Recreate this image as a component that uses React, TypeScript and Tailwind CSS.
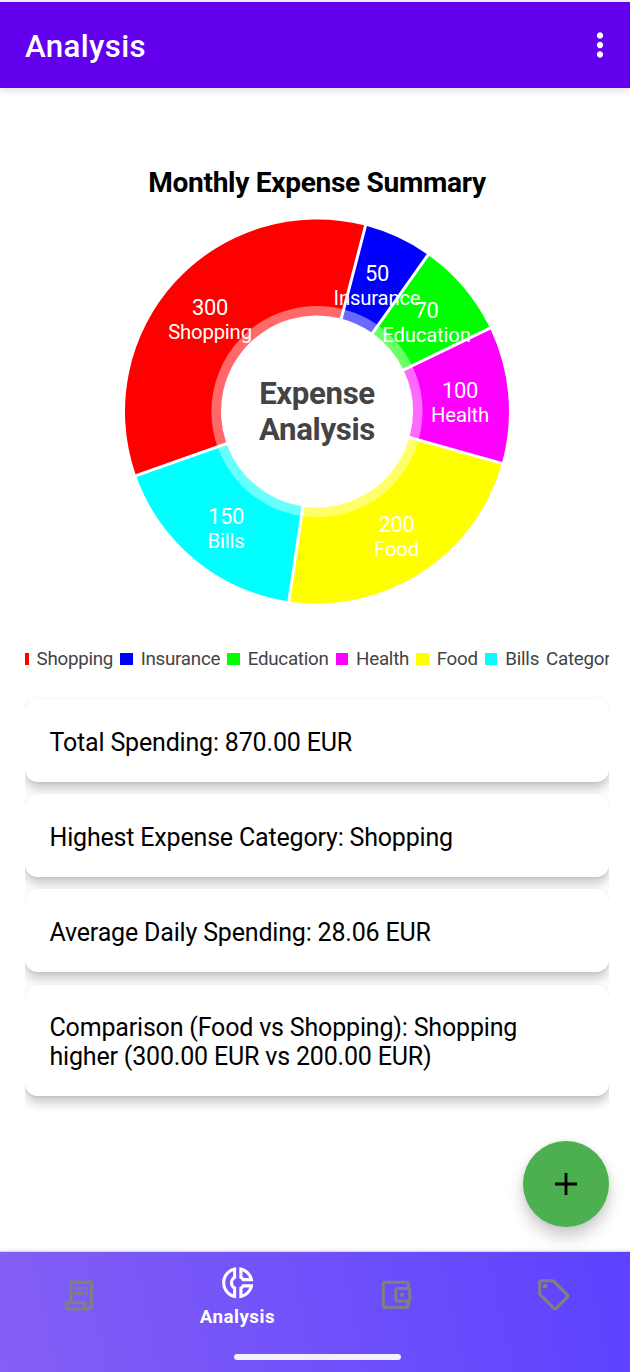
import React from "react";
import {
  MdMoreVert,
  MdOutlineAccountBalanceWallet,
  MdOutlineDonutSmall,
  MdOutlineSell,
} from "react-icons/md";

type Slice = { name: string; value: number; color: string; x: number; y: number };

const slices: Slice[] = [
  { name: "Shopping", value: 300, color: "#ff0000", x: 210, y: 315 },
  { name: "Insurance", value: 50, color: "#0000ff", x: 377, y: 280.5 },
  { name: "Education", value: 70, color: "#00ff00", x: 426.5, y: 318 },
  { name: "Health", value: 100, color: "#ff00ff", x: 460, y: 398 },
  { name: "Food", value: 200, color: "#ffff00", x: 396.5, y: 532 },
  { name: "Bills", value: 150, color: "#00ffff", x: 226, y: 524 },
];

const CX = 317;
const CY = 411.5;
const OUTER = 192;
const INNER = 96;
const START = 250.5;
const total = slices.reduce((sum, s) => sum + s.value, 0);

function point(angle: number, r: number) {
  const a = (angle * Math.PI) / 180;
  return `${(CX + r * Math.sin(a)).toFixed(2)} ${(CY - r * Math.cos(a)).toFixed(2)}`;
}

function slicePath(from: number, to: number) {
  // Half of the 3px gap between neighbours, as an angle at each radius.
  const go = ((1.5 / OUTER) * 180) / Math.PI;
  const gi = ((1.5 / INNER) * 180) / Math.PI;
  return [
    `M${point(from + go, OUTER)}`,
    `A${OUTER} ${OUTER} 0 0 1 ${point(to - go, OUTER)}`,
    `L${point(to - gi, INNER)}`,
    `A${INNER} ${INNER} 0 0 0 ${point(from + gi, INNER)}`,
    "Z",
  ].join(" ");
}

function Donut() {
  let angle = START;
  return (
    <svg className="block h-[400px] w-[634px]" viewBox="0 210 634 400">
      {slices.map((s) => {
        const from = angle;
        angle += (s.value / total) * 360;
        return <path key={s.name} d={slicePath(from, angle)} fill={s.color} />;
      })}
      <circle cx={CX} cy={CY} r={100.6} fill="none" stroke="#fff" strokeOpacity={0.41} strokeWidth={10} />
      <g textAnchor="middle" fill="#fff">
        {slices.map((s) => (
          <g key={s.name}>
            <text x={s.x} y={s.y} fontSize={21.9} letterSpacing={-0.25}>{s.value}</text>
            <text x={s.x} y={s.y + 24.3} fontSize={20.3} letterSpacing={-0.17}>{s.name}</text>
          </g>
        ))}
      </g>
      <g textAnchor="middle" fill="#444" fontSize={31.2} fontWeight={700} letterSpacing={-0.35}>
        <text x={CX} y={404}>Expense</text>
        <text x={CX} y={440}>Analysis</text>
      </g>
    </svg>
  );
}

function ReceiptIcon({ className }: { className: string }) {
  return (
    <svg className={className} viewBox="0 0 24 24" fill="currentColor">
      <path d="M19.5 3.5 18 2l-1.5 1.5L15 2l-1.5 1.5L12 2l-1.5 1.5L9 2 7.5 3.5 6 2v14H3v3c0 1.66 1.34 3 3 3h12c1.66 0 3-1.34 3-3V2l-1.5 1.5zM15 20H6c-.55 0-1-.45-1-1v-1h10v2zm4-1c0 .55-.45 1-1 1s-1-.45-1-1v-3H8V5h11v14z" />
      <rect x="9" y="7" width="6" height="2" rx="0.3" />
      <rect x="9" y="10" width="6" height="2" rx="0.3" />
      <circle cx="17" cy="8" r="1.05" />
      <circle cx="17" cy="11" r="1.05" />
    </svg>
  );
}

function Legend() {
  return (
    <div className="ml-[25px] flex h-[24px] w-[584px] overflow-hidden">
      <div className="-ml-[9px] flex shrink-0 items-center gap-[7px] whitespace-nowrap text-[18.75px] tracking-[-0.25px] text-[#444]">
        {slices.map((s) => (
          <div key={s.name} className="flex items-center gap-[8px]">
            <span className="size-[12.5px]" style={{ backgroundColor: s.color }} />
            <span>{s.name}</span>
          </div>
        ))}
        <span>Categories</span>
      </div>
    </div>
  );
}

function Card({ children }: { children: React.ReactNode }) {
  return (
    <div className="rounded-[12.5px] bg-white pt-[28.7px] pr-[20px] pb-[25px] pl-[24.5px] text-[25px] leading-[29px] tracking-[-0.18px] text-black shadow-[0_7px_11px_rgba(0,0,0,0.21),0_1px_3px_rgba(0,0,0,0.08)]">
      {children}
    </div>
  );
}

export default function App() {
  return (
    <div className="relative flex h-[1372px] w-[630px] flex-col overflow-hidden bg-white font-[Roboto,sans-serif]">
      <header className="flex h-[88px] shrink-0 items-center justify-between border-t-2 border-[#ececf2] bg-[#6200ee] pr-[11px] pl-[25px] text-white shadow-[0_2px_8px_rgba(0,0,0,0.14)]">
        <h1 className="pt-[3px] text-[31.25px] leading-[36px] font-medium tracking-[0.35px]">Analysis</h1>
        <MdMoreVert className="size-[38px]" />
      </header>

      <main className="flex w-[634px] flex-1 flex-col">
        <h2 className="mt-[78px] h-[44px] text-center text-[28.1px] leading-[34px] font-bold tracking-[-0.32px] text-black">
          Monthly Expense Summary
        </h2>
        <Donut />
        <div className="mt-[37px]">
          <Legend />
        </div>
        <section className="mt-[18px] ml-[25px] flex w-[584px] flex-col gap-[12.5px] overflow-hidden pt-[10px] pb-[26px]">
          <Card>Total Spending: 870.00 EUR</Card>
          <Card>Highest Expense Category: Shopping</Card>
          <Card>Average Daily Spending: 28.06 EUR</Card>
          <Card>
            Comparison (Food vs Shopping): Shopping
            <br />
            higher (300.00 EUR vs 200.00 EUR)
          </Card>
        </section>
      </main>

      <button
        aria-label="Add"
        className="absolute top-[1141px] left-[523px] flex size-[86px] items-center justify-center rounded-full bg-[#4caf50] shadow-[0_10px_16px_rgba(0,0,0,0.2),0_0_6px_rgba(0,0,0,0.08)]"
      >
        <svg className="size-[22px]" viewBox="0 0 22 22">
          <path d="M11 0v22M0 11h22" stroke="#000" strokeWidth="2.8" />
        </svg>
      </button>

      <nav className="relative flex h-[121px] w-[634px] shrink-0 flex-col border-t border-[#d5cdfb] bg-[linear-gradient(78deg,#845ff5,#5c42ff)] shadow-[0_-1px_5px_rgba(0,0,0,0.08)]">
        <div className="grid h-[87px] w-[633px] grid-cols-4 justify-items-center text-[#808080]">
          <ReceiptIcon className="mt-[24px] size-[37.5px]" />
          <div className="flex flex-col items-center pt-[12px] text-white">
            <MdOutlineDonutSmall className="size-[37.5px]" />
            <span className="mt-[4px] text-[18.75px] leading-[22px] font-bold tracking-[0.5px]">Analysis</span>
          </div>
          <MdOutlineAccountBalanceWallet className="mt-[24px] size-[37.5px]" />
          <MdOutlineSell className="mt-[24px] size-[37.5px]" />
        </div>
        <div className="mx-auto mt-[15px] h-[6px] w-[167px] rounded-full bg-[#f3f0ff]" />
      </nav>
    </div>
  );
}
